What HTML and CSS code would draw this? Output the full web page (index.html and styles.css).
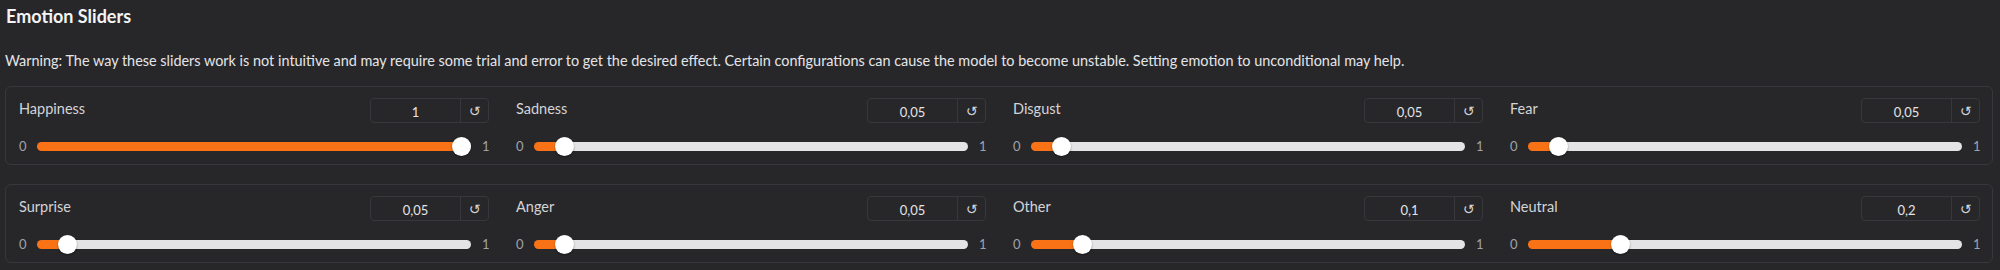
FILE: index.html
```html
<!DOCTYPE html>
<html lang="en">
<head>
  <meta charset="UTF-8" />
  <meta name="viewport" content="width=device-width, initial-scale=1.0"/>
  <title>Emotion Sliders</title>
  <link rel="stylesheet" href="styles.css">
</head>
<body>
  <div class="page">
    <div class="heading">Emotion Sliders</div>
    <p class="warning">Warning: The way these sliders work is not intuitive and may require some trial and error to get the desired effect. Certain configurations can cause the model to become unstable. Setting emotion to unconditional may help.</p>

    <div class="panel">
      <div class="slider">
        <div class="slider-top">
          <span class="label">Happiness</span>
          <div class="number-box"><input class="number" type="text" value="1"><button class="reset">&#8634;</button></div>
        </div>
        <div class="slider-row">
          <span class="minmax">0</span>
          <input class="range" type="range" min="0" max="1" step="0.05" value="1" style="--v: 1">
          <span class="minmax">1</span>
        </div>
      </div>
      <div class="slider">
        <div class="slider-top">
          <span class="label">Sadness</span>
          <div class="number-box"><input class="number" type="text" value="0,05"><button class="reset">&#8634;</button></div>
        </div>
        <div class="slider-row">
          <span class="minmax">0</span>
          <input class="range" type="range" min="0" max="1" step="0.05" value="0.05" style="--v: 0.05">
          <span class="minmax">1</span>
        </div>
      </div>
      <div class="slider">
        <div class="slider-top">
          <span class="label">Disgust</span>
          <div class="number-box"><input class="number" type="text" value="0,05"><button class="reset">&#8634;</button></div>
        </div>
        <div class="slider-row">
          <span class="minmax">0</span>
          <input class="range" type="range" min="0" max="1" step="0.05" value="0.05" style="--v: 0.05">
          <span class="minmax">1</span>
        </div>
      </div>
      <div class="slider">
        <div class="slider-top">
          <span class="label">Fear</span>
          <div class="number-box"><input class="number" type="text" value="0,05"><button class="reset">&#8634;</button></div>
        </div>
        <div class="slider-row">
          <span class="minmax">0</span>
          <input class="range" type="range" min="0" max="1" step="0.05" value="0.05" style="--v: 0.05">
          <span class="minmax">1</span>
        </div>
      </div>
    </div>

    <div class="panel">
      <div class="slider">
        <div class="slider-top">
          <span class="label">Surprise</span>
          <div class="number-box"><input class="number" type="text" value="0,05"><button class="reset">&#8634;</button></div>
        </div>
        <div class="slider-row">
          <span class="minmax">0</span>
          <input class="range" type="range" min="0" max="1" step="0.05" value="0.05" style="--v: 0.05">
          <span class="minmax">1</span>
        </div>
      </div>
      <div class="slider">
        <div class="slider-top">
          <span class="label">Anger</span>
          <div class="number-box"><input class="number" type="text" value="0,05"><button class="reset">&#8634;</button></div>
        </div>
        <div class="slider-row">
          <span class="minmax">0</span>
          <input class="range" type="range" min="0" max="1" step="0.05" value="0.05" style="--v: 0.05">
          <span class="minmax">1</span>
        </div>
      </div>
      <div class="slider">
        <div class="slider-top">
          <span class="label">Other</span>
          <div class="number-box"><input class="number" type="text" value="0,1"><button class="reset">&#8634;</button></div>
        </div>
        <div class="slider-row">
          <span class="minmax">0</span>
          <input class="range" type="range" min="0" max="1" step="0.05" value="0.1" style="--v: 0.1">
          <span class="minmax">1</span>
        </div>
      </div>
      <div class="slider">
        <div class="slider-top">
          <span class="label">Neutral</span>
          <div class="number-box"><input class="number" type="text" value="0,2"><button class="reset">&#8634;</button></div>
        </div>
        <div class="slider-row">
          <span class="minmax">0</span>
          <input class="range" type="range" min="0" max="1" step="0.05" value="0.2" style="--v: 0.2">
          <span class="minmax">1</span>
        </div>
      </div>
    </div>
  </div>
</body>
</html>
```

FILE: styles.css
```css
body {
  margin: 0;
  background-color: #27272a;
  color: #e4e4e7;
  font-family: Lato, "Noto Sans", sans-serif;
}

.page {
  padding: 4px 7px 0 5px;
}

.heading {
  font-size: 18px;
  font-weight: 700;
  line-height: 24px;
  color: #f4f4f5;
  padding-left: 1px;
}

.warning {
  font-size: 14.43px;
  line-height: 20px;
  margin: 23px 0 15px 0;
  color: #e4e4e7;
}

.panel {
  display: flex;
  gap: 27px;
  border: 1px solid #38383c;
  border-radius: 6px;
  padding: 11px 12px 8px 13px;
  margin-bottom: 19px;
}

.slider {
  flex: 1;
  display: flex;
  flex-direction: column;
  gap: 13px;
}

.slider-top {
  display: flex;
  justify-content: space-between;
  align-items: center;
}

.label {
  font-size: 14.5px;
  color: #d4d4d8;
  margin-top: -4px;
}

.number-box {
  display: flex;
  height: 25px;
  border: 1px solid #38383c;
  border-radius: 4px;
  box-sizing: border-box;
}

.number {
  width: 89px;
  background: transparent;
  border: none;
  border-right: 1px solid #38383c;
  color: #e4e4e7;
  font-family: Lato, "Noto Sans", sans-serif;
  font-size: 13px;
  text-align: center;
  padding: 2px 0 0 0;
  outline: none;
}

.reset {
  width: 27px;
  background: transparent;
  border: none;
  color: #d4d4d8;
  font-family: "DejaVu Sans", sans-serif;
  font-size: 14px;
  padding: 0;
  cursor: pointer;
}

.slider-row {
  display: flex;
  align-items: center;
  gap: 11px;
  height: 20px;
}

.minmax {
  font-size: 13px;
  color: #a1a1aa;
  width: 7px;
}

.range {
  -webkit-appearance: none;
  appearance: none;
  flex: 1;
  height: 20px;
  margin: 0;
  background: transparent;
}

.range::-webkit-slider-runnable-track {
  height: 9px;
  border-radius: 5px;
  background: linear-gradient(to right, #f97316 calc(9.5px + (100% - 19px) * var(--v)), #e4e4e7 0);
}

.range::-webkit-slider-thumb {
  -webkit-appearance: none;
  width: 19px;
  height: 19px;
  margin-top: -5px;
  border-radius: 50%;
  background: #ffffff;
  box-shadow: 0 1px 2px rgba(0, 0, 0, 0.4);
}
```
